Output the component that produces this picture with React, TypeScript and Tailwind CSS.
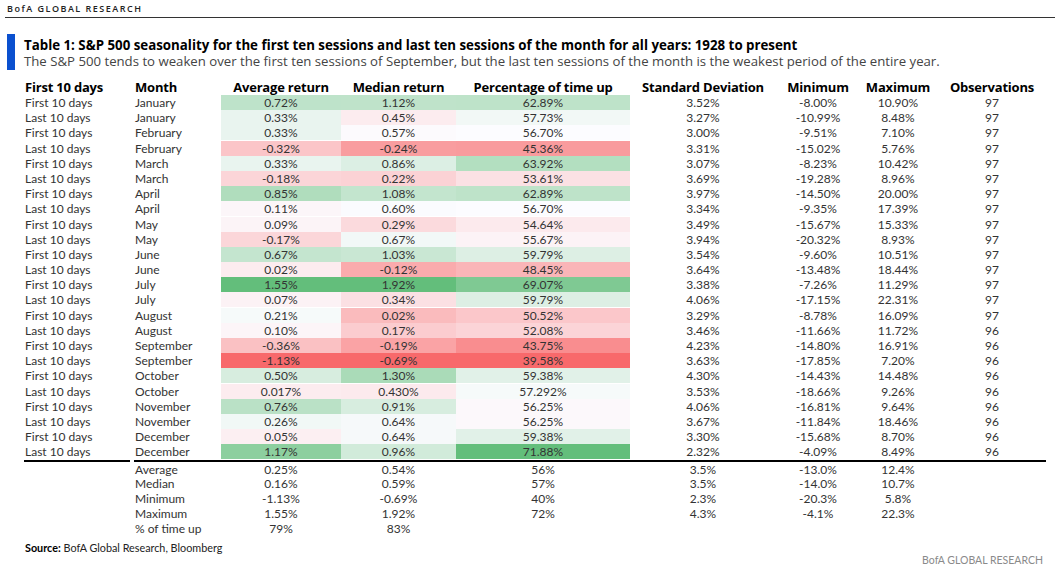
import React from 'react';

type Row = {
  period: string;
  month: string;
  avg: number;
  avgText: string;
  med: number;
  medText: string;
  pct: number;
  pctText: string;
  std: string;
  min: string;
  max: string;
  obs: number;
};

const raw: [string, string, string, string, string, string, string, string, number][] = [
  ['First 10 days', 'January', '0.72', '1.12', '62.89', '3.52', '-8.00', '10.90', 97],
  ['Last 10 days', 'January', '0.33', '0.45', '57.73', '3.27', '-10.99', '8.48', 97],
  ['First 10 days', 'February', '0.33', '0.57', '56.70', '3.00', '-9.51', '7.10', 97],
  ['Last 10 days', 'February', '-0.32', '-0.24', '45.36', '3.31', '-15.02', '5.76', 97],
  ['First 10 days', 'March', '0.33', '0.86', '63.92', '3.07', '-8.23', '10.42', 97],
  ['Last 10 days', 'March', '-0.18', '0.22', '53.61', '3.69', '-19.28', '8.96', 97],
  ['First 10 days', 'April', '0.85', '1.08', '62.89', '3.97', '-14.50', '20.00', 97],
  ['Last 10 days', 'April', '0.11', '0.60', '56.70', '3.34', '-9.35', '17.39', 97],
  ['First 10 days', 'May', '0.09', '0.29', '54.64', '3.49', '-15.67', '15.33', 97],
  ['Last 10 days', 'May', '-0.17', '0.67', '55.67', '3.94', '-20.32', '8.93', 97],
  ['First 10 days', 'June', '0.67', '1.03', '59.79', '3.54', '-9.60', '10.51', 97],
  ['Last 10 days', 'June', '0.02', '-0.12', '48.45', '3.64', '-13.48', '18.44', 97],
  ['First 10 days', 'July', '1.55', '1.92', '69.07', '3.38', '-7.26', '11.29', 97],
  ['Last 10 days', 'July', '0.07', '0.34', '59.79', '4.06', '-17.15', '22.31', 97],
  ['First 10 days', 'August', '0.21', '0.02', '50.52', '3.29', '-8.78', '16.09', 97],
  ['Last 10 days', 'August', '0.10', '0.17', '52.08', '3.46', '-11.66', '11.72', 96],
  ['First 10 days', 'September', '-0.36', '-0.19', '43.75', '4.23', '-14.80', '16.91', 96],
  ['Last 10 days', 'September', '-1.13', '-0.69', '39.58', '3.63', '-17.85', '7.20', 96],
  ['First 10 days', 'October', '0.50', '1.30', '59.38', '4.30', '-14.43', '14.48', 96],
  ['Last 10 days', 'October', '0.017', '0.430', '57.292', '3.53', '-18.66', '9.26', 96],
  ['First 10 days', 'November', '0.76', '0.91', '56.25', '4.06', '-16.81', '9.64', 96],
  ['Last 10 days', 'November', '0.26', '0.64', '56.25', '3.67', '-11.84', '18.46', 96],
  ['First 10 days', 'December', '0.05', '0.64', '59.38', '3.30', '-15.68', '8.70', 96],
  ['Last 10 days', 'December', '1.17', '0.96', '71.88', '2.32', '-4.09', '8.49', 96],
];

const rows: Row[] = raw.map(([period, month, a, m, p, s, mn, mx, obs]) => ({
  period,
  month,
  avg: parseFloat(a),
  avgText: a + '%',
  med: parseFloat(m),
  medText: m + '%',
  pct: parseFloat(p),
  pctText: p + '%',
  std: s + '%',
  min: mn + '%',
  max: mx + '%',
  obs,
}));

const summary = [
  ['Average', '0.25%', '0.54%', '56%', '3.5%', '-13.0%', '12.4%'],
  ['Median', '0.16%', '0.59%', '57%', '3.5%', '-14.0%', '10.7%'],
  ['Minimum', '-1.13%', '-0.69%', '40%', '2.3%', '-20.3%', '5.8%'],
  ['Maximum', '1.55%', '1.92%', '72%', '4.3%', '-4.1%', '22.3%'],
  ['% of time up', '79%', '83%', '', '', '', ''],
];

// Excel style red - white - green scale, midpoint at the median
function median(values: number[]) {
  const s = [...values].sort((x, y) => x - y);
  const h = s.length / 2;
  return s.length % 2 ? s[Math.floor(h)] : (s[h - 1] + s[h]) / 2;
}

function makeScale(values: number[]) {
  const lo = Math.min(...values);
  const hi = Math.max(...values);
  const mid = median(values);
  const white = [252, 252, 255];
  const green = [99, 190, 123];
  const red = [248, 105, 107];
  return (v: number) => {
    let t = 0;
    let target = white;
    if (v >= mid) {
      t = hi === mid ? 0 : (v - mid) / (hi - mid);
      target = green;
    } else {
      t = (mid - v) / (mid - lo);
      target = red;
    }
    const c = white.map((w, i) => Math.round(w + (target[i] - w) * t));
    return `rgb(${c[0]}, ${c[1]}, ${c[2]})`;
  };
}

const avgColor = makeScale(rows.map((r) => r.avg));
const medColor = makeScale(rows.map((r) => r.med));
const pctColor = makeScale(rows.map((r) => r.pct));

const cols = 'grid grid-cols-[110px_87px_120px_115px_174px_146px_84px_76px_112px]';

export default function App() {
  return (
    <div className="w-[1060px] h-[577px] bg-white text-[#333] font-['Lato',sans-serif] relative overflow-hidden">
      {/* Top banner */}
      <div className="mx-[5px] pt-[3px] h-[18px] border-b border-[#333] font-['Open_Sans',sans-serif] text-[9px] leading-[12px] font-semibold tracking-[1.5px] text-[#222]">
        <div className="ml-[2px]">BofA GLOBAL RESEARCH</div>
      </div>

      {/* Title */}
      <div className="flex mt-[16px] ml-[7px] font-['Open_Sans',sans-serif]">
        <div className="w-[8px] h-[36px] bg-[#0b50cf]" />
        <div className="ml-[9px] mt-[3px]">
          <div className="text-[13.3px] font-bold text-black leading-[16px]">
            Table 1: S&amp;P 500 seasonality for the first ten sessions and last ten sessions of the month for all years: 1928 to present
          </div>
          <div className="text-[13.2px] text-[#444] leading-[16px]">
            The S&amp;P 500 tends to weaken over the first ten sessions of September, but the last ten sessions of the month is the weakest period of the entire year.
          </div>
        </div>
      </div>

      {/* Table */}
      <div className="ml-[24px] mt-[8px] text-[12px]">
        <div className={`${cols} h-[17px] items-center font-bold text-black text-[13px] leading-[16px] font-['Open_Sans',sans-serif] tracking-[-0.2px]`}>
          <div className="pl-[1px] whitespace-nowrap">First 10 days</div>
          <div className="pl-[1px]">Month</div>
          <div className="text-center whitespace-nowrap">Average return</div>
          <div className="text-center whitespace-nowrap">Median return</div>
          <div className="text-center whitespace-nowrap">Percentage of time up</div>
          <div className="text-center whitespace-nowrap">Standard Deviation</div>
          <div className="text-center">Minimum</div>
          <div className="text-center">Maximum</div>
          <div className="text-center">Observations</div>
        </div>

        {rows.map((r, i) => (
          <div key={i} className={`${cols} h-[15.2px] leading-[15px]`}>
            <div className="pl-[1px]">{r.period}</div>
            <div className="pl-[1px]">{r.month}</div>
            <div className="text-center border-b border-white" style={{ backgroundColor: avgColor(r.avg) }}>
              {r.avgText}
            </div>
            <div className="text-center border-b border-white" style={{ backgroundColor: medColor(r.med) }}>
              {r.medText}
            </div>
            <div className="text-center border-b border-white" style={{ backgroundColor: pctColor(r.pct) }}>
              {r.pctText}
            </div>
            <div className="text-center">{r.std}</div>
            <div className="text-center">{r.min}</div>
            <div className="text-center">{r.max}</div>
            <div className="text-center">{r.obs}</div>
          </div>
        ))}

        <div className="flex h-[2px]">
          <div className="w-[106px] bg-black" />
          <div className="w-[4px]" />
          <div className="w-[912px] bg-black" />
        </div>

        {summary.map((s, i) => (
          <div key={i} className={`${cols} h-[14.8px] leading-[15px]`}>
            <div />
            <div className="pl-[1px] whitespace-nowrap">{s[0]}</div>
            <div className="text-center">{s[1]}</div>
            <div className="text-center">{s[2]}</div>
            <div className="text-center">{s[3]}</div>
            <div className="text-center">{s[4]}</div>
            <div className="text-center">{s[5]}</div>
            <div className="text-center">{s[6]}</div>
            <div />
          </div>
        ))}

        <div className="mt-[5px] text-[10.8px] text-[#222] pl-[1px]">
          <span className="font-bold text-black">Source:</span> BofA Global Research, Bloomberg
        </div>
      </div>

      <div className="absolute right-[17px] top-[553px] text-[10.5px] text-[#8a8a8a]">BofA GLOBAL RESEARCH</div>
    </div>
  );
}
